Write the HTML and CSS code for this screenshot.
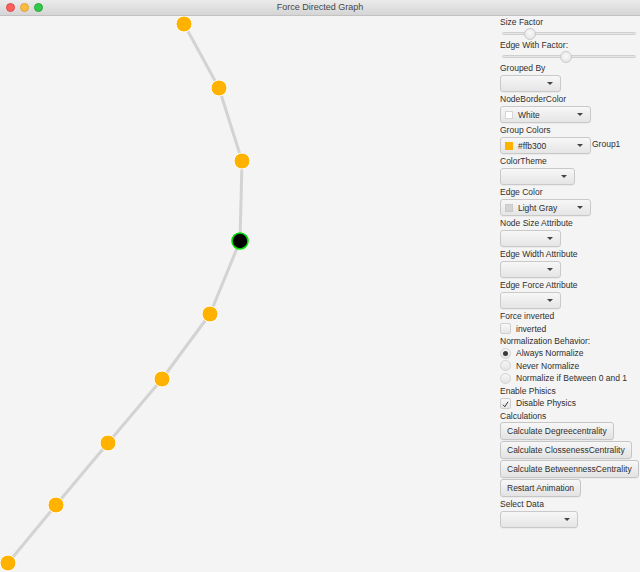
FILE: index.html
```html
<!DOCTYPE html>
<html>
<head>
<meta charset="utf-8">
<link rel="stylesheet" href="styles.css">
</head>
<body>
<div class="window">
  <div class="titlebar">
    <div class="lights">
      <span class="light red"></span>
      <span class="light yellow"></span>
      <span class="light green"></span>
    </div>
    <div class="title">Force Directed Graph</div>
  </div>
  <div class="content">
    <div class="canvas">
      <svg class="graph" width="500" height="556" viewBox="0 0 500 556">
        <g class="edges">
          <line x1="184" y1="8" x2="219" y2="72"/>
          <line x1="219" y1="72" x2="242" y2="145"/>
          <line x1="242" y1="145" x2="240" y2="225"/>
          <line x1="240" y1="225" x2="210" y2="298"/>
          <line x1="210" y1="298" x2="162" y2="363"/>
          <line x1="162" y1="363" x2="108" y2="427"/>
          <line x1="108" y1="427" x2="56" y2="489"/>
          <line x1="56" y1="489" x2="8" y2="547"/>
        </g>
        <g class="nodes">
          <circle cx="184" cy="8" r="8"/>
          <circle cx="219" cy="72" r="8"/>
          <circle cx="242" cy="145" r="8"/>
          <circle class="sel" cx="240" cy="225" r="8"/>
          <circle cx="210" cy="298" r="8"/>
          <circle cx="162" cy="363" r="8"/>
          <circle cx="108" cy="427" r="8"/>
          <circle cx="56" cy="489" r="8"/>
          <circle cx="8" cy="547" r="8"/>
        </g>
      </svg>
    </div>
    <div class="panel">
      <div class="label">Size Factor</div>
      <div class="slider"><div class="track"></div><div class="thumb" style="left:28px"></div></div>
      <div class="label">Edge With Factor:</div>
      <div class="slider"><div class="track"></div><div class="thumb" style="left:64px"></div></div>
      <div class="label">Grouped By</div>
      <div class="combo w61"><span class="ctext"></span><span class="arrow"></span></div>
      <div class="label">NodeBorderColor</div>
      <div class="combo w91"><span class="swatch white"></span><span class="ctext">White</span><span class="arrow"></span></div>
      <div class="label">Group Colors</div>
      <div class="row">
        <div class="combo w91"><span class="swatch orange"></span><span class="ctext">#ffb300</span><span class="arrow"></span></div>
        <span class="side">Group1</span>
      </div>
      <div class="label">ColorTheme</div>
      <div class="combo w75"><span class="ctext"></span><span class="arrow"></span></div>
      <div class="label">Edge Color</div>
      <div class="combo w91"><span class="swatch gray"></span><span class="ctext">Light Gray</span><span class="arrow"></span></div>
      <div class="label">Node Size Attribute</div>
      <div class="combo w61"><span class="ctext"></span><span class="arrow"></span></div>
      <div class="label">Edge Width Attribute</div>
      <div class="combo w61"><span class="ctext"></span><span class="arrow"></span></div>
      <div class="label">Edge Force Attribute</div>
      <div class="combo w61"><span class="ctext"></span><span class="arrow"></span></div>
      <div class="label">Force inverted</div>
      <div class="check"><span class="box"></span><span>inverted</span></div>
      <div class="label">Normalization Behavior:</div>
      <div class="radio"><span class="dot on"></span><span>Always Normalize</span></div>
      <div class="radio"><span class="dot"></span><span>Never Normalize</span></div>
      <div class="radio"><span class="dot"></span><span>Normalize if Between 0 and 1</span></div>
      <div class="label">Enable Phisics</div>
      <div class="check"><span class="box"><svg width="11" height="11" viewBox="0 0 11 11"><path d="M2.5 5.8 L4.6 8.3 L8.6 2.2" fill="none" stroke="#333" stroke-width="1.2"/></svg></span><span>Disable Physics</span></div>
      <div class="label">Calculations</div>
      <div class="btn">Calculate Degreecentrality</div>
      <div class="btn">Calculate ClossenessCentrality</div>
      <div class="btn">Calculate BetweennessCentrality</div>
      <div class="btn">Restart Animation</div>
      <div class="label">Select Data</div>
      <div class="combo w78"><span class="ctext"></span><span class="arrow"></span></div>
    </div>
  </div>
</div>
</body>
</html>
```
FILE: styles.css
```css
html, body {
  margin: 0;
  padding: 0;
}
body {
  width: 640px;
  height: 572px;
  overflow: hidden;
  background: #f4f4f4;
  font-family: "Liberation Sans", Arial, sans-serif;
  color: #2e2e2e;
}
.window {
  display: flex;
  flex-direction: column;
  height: 572px;
}
.titlebar {
  height: 15px;
  flex: none;
  display: flex;
  align-items: center;
  position: relative;
  background: linear-gradient(#ebebeb, #d5d5d5);
  border-bottom: 1px solid #c2c2c2;
}
.lights {
  display: flex;
  gap: 5px;
  padding-left: 6px;
}
.light {
  width: 9px;
  height: 9px;
  border-radius: 50%;
  box-sizing: border-box;
}
.light.red { background: #fc605c; border: 0.5px solid #de4a46; }
.light.yellow { background: #fdbc40; border: 0.5px solid #dea236; }
.light.green { background: #34c84a; border: 0.5px solid #27aa35; }
.title {
  position: absolute;
  left: 0;
  right: 0;
  top: 0;
  line-height: 15px;
  text-align: center;
  font-size: 9px;
  color: #474747;
}
.content {
  flex: 1;
  display: flex;
}
.canvas {
  width: 500px;
  flex: none;
}
.graph {
  display: block;
  overflow: visible;
}
.edges line {
  stroke: #d3d3d3;
  stroke-width: 3;
  stroke-linecap: round;
}
.nodes circle {
  fill: #ffb300;
  stroke: #ffffff;
  stroke-width: 1;
}
.nodes circle.sel {
  fill: #000;
  stroke: #00e000;
  stroke-width: 1.6;
}
.panel {
  width: 140px;
  flex: none;
  display: flex;
  flex-direction: column;
  align-items: flex-start;
  font-size: 8.5px;
}
.label {
  height: 12px;
  line-height: 12px;
  white-space: nowrap;
}
.slider {
  position: relative;
  width: 134px;
  height: 11px;
  margin-left: 2px;
}
.track {
  position: absolute;
  left: 0;
  right: 0;
  top: 4px;
  height: 3px;
  border-radius: 2px;
  background: #e6e6e6;
  border: 0.5px solid #cfcfcf;
  box-sizing: border-box;
}
.thumb {
  position: absolute;
  top: -0.5px;
  width: 12px;
  height: 12px;
  margin-left: -6px;
  border-radius: 50%;
  box-sizing: border-box;
  border: 1px solid #cbcbcb;
  background: radial-gradient(circle at 50% 40%, #fafafa 0, #eaeaea 60%, #dedede 100%);
}
.combo {
  box-sizing: border-box;
  height: 17px;
  margin: 1px 0;
  display: flex;
  align-items: center;
  border: 1px solid #c9c9c9;
  border-radius: 3px;
  background: linear-gradient(#f7f7f7, #e5e5e5);
  box-shadow: 0 0.5px 0.5px rgba(0,0,0,0.08);
  padding: 0 0 0 4px;
  position: relative;
}
.w61 { width: 61px; }
.w75 { width: 75px; }
.w78 { width: 78px; }
.w91 { width: 91px; }
.ctext {
  flex: 1;
  white-space: nowrap;
  color: #2e2e2e;
  font-size: 8.5px;
}
.swatch {
  width: 8px;
  height: 8px;
  margin-right: 5px;
  box-sizing: border-box;
}
.swatch.white { background: #fff; border: 0.5px solid #d6d6d6; }
.swatch.orange { background: #ffb300; }
.swatch.gray { background: #d3d3d3; border: 0.5px solid #cacaca; }
.arrow {
  width: 0;
  height: 0;
  border-left: 3px solid transparent;
  border-right: 3px solid transparent;
  border-top: 3px solid #444;
  margin-right: 7px;
  margin-left: 4px;
}
.row {
  display: flex;
  align-items: flex-start;
}
.side {
  margin-left: 1px;
  margin-top: 2px;
  line-height: 12px;
}
.check {
  height: 13px;
  display: flex;
  align-items: center;
  white-space: nowrap;
}
.box {
  width: 11px;
  height: 11px;
  box-sizing: border-box;
  border: 1px solid #cfcfcf;
  border-radius: 2px;
  background: linear-gradient(#f8f8f8, #e6e6e6);
  margin-right: 5px;
  display: flex;
}
.radio {
  height: 12.5px;
  display: flex;
  align-items: center;
  white-space: nowrap;
}
.dot {
  width: 11px;
  height: 11px;
  box-sizing: border-box;
  border-radius: 50%;
  border: 1px solid #d3d3d3;
  background: linear-gradient(#f6f6f6, #e4e4e4);
  margin-right: 5px;
  display: flex;
  align-items: center;
  justify-content: center;
}
.dot.on::after {
  content: "";
  width: 5px;
  height: 5px;
  border-radius: 50%;
  background: #3a3a3a;
}
.btn {
  box-sizing: border-box;
  height: 18px;
  margin-bottom: 1px;
  line-height: 16px;
  padding: 0 6px;
  border: 1px solid #c6c6c6;
  border-radius: 3px;
  background: linear-gradient(#f7f7f7, #e3e3e3);
  box-shadow: 0 0.5px 0.5px rgba(0,0,0,0.08);
  white-space: nowrap;
}
```
